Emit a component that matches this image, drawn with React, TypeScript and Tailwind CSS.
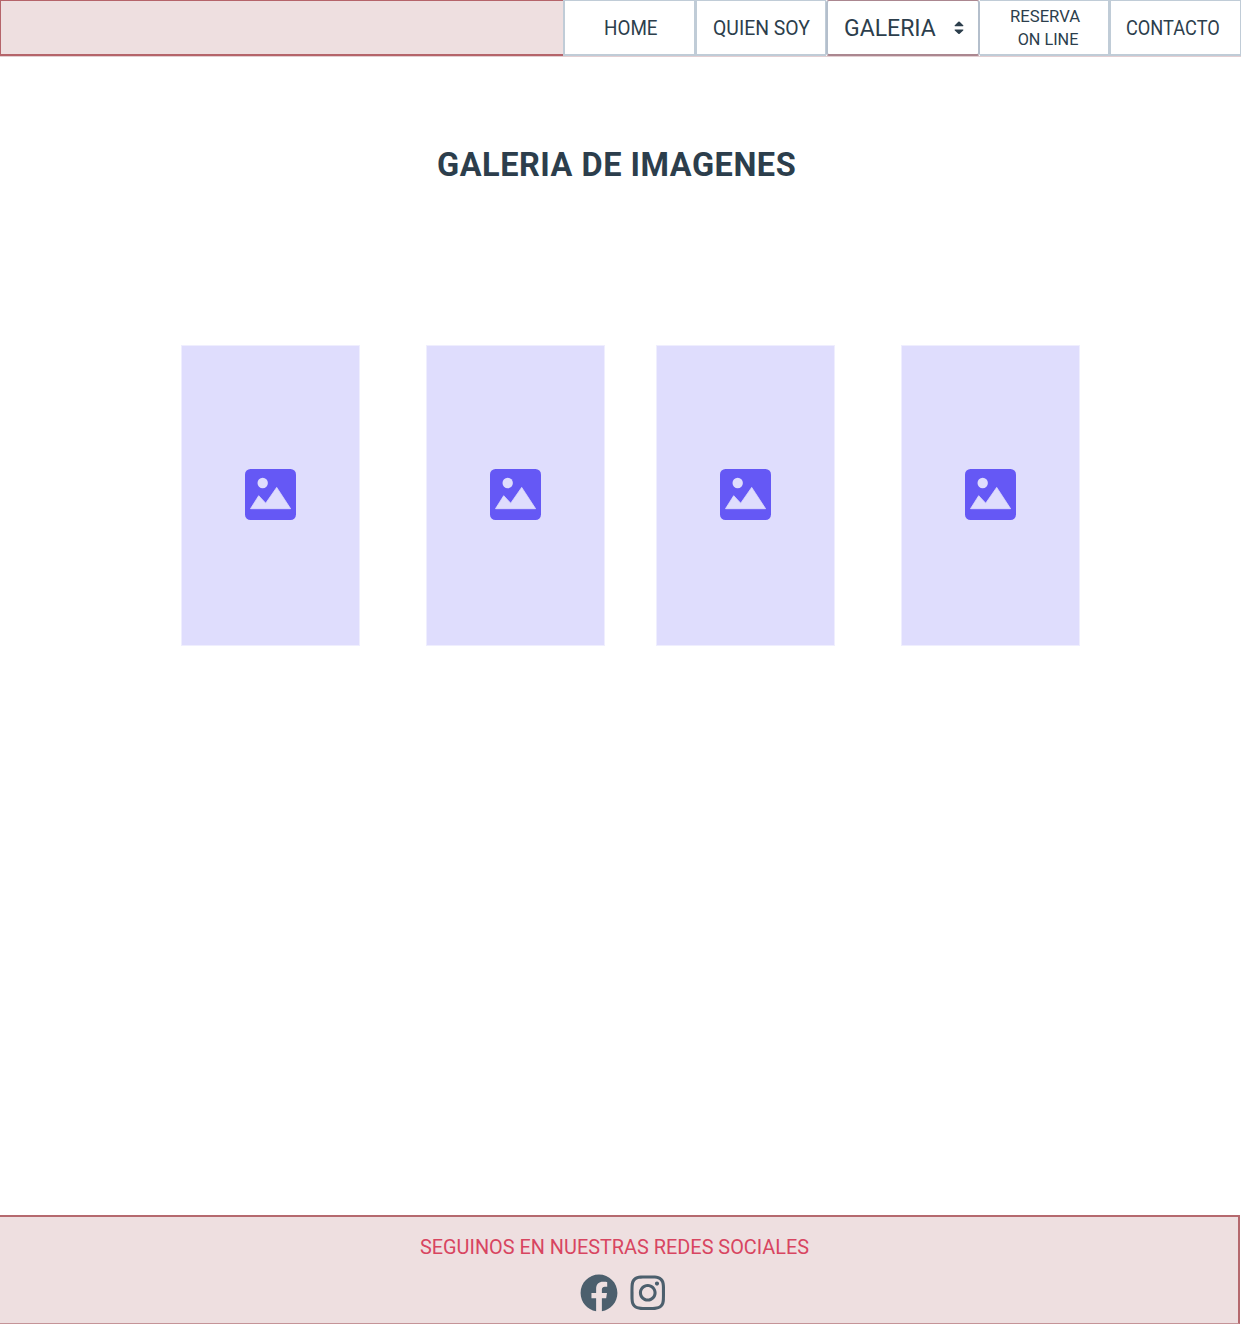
import type { ReactNode } from "react";
import { FaFacebook, FaInstagram } from "react-icons/fa";

function NavCell({ className, children }: { className: string; children: ReactNode }) {
  return (
    <a
      className={`flex h-14 shrink-0 items-center border-t border-b-2 border-[#c0ccd7] bg-white whitespace-nowrap ${className}`}
    >
      {children}
    </a>
  );
}

function PictureCard() {
  return (
    <div className="flex h-[301px] w-[179px] justify-center border border-[#efeefe] bg-[#dfddfd] pt-[123px]">
      <svg viewBox="0 0 51 51" className="size-[51px]">
        <rect width="51" height="51" rx="5.5" fill="#6558f5" />
        <circle cx="17.7" cy="14" r="5.2" fill="#dfddfd" />
        <path d="M5.5 39.7 13.7 26.7 20.7 34.2 31.7 18.4 45.6 39.7Z" fill="#dfddfd" stroke="#dfddfd" strokeWidth="0.8" strokeLinejoin="round" />
      </svg>
    </div>
  );
}

export default function App() {
  return (
    <div className="flex h-[1324px] w-[1241px] flex-col overflow-hidden bg-white font-['Roboto',sans-serif] text-[#2c3e4c]">
      <header className="flex h-[57px] shrink-0 border-b border-[#e3cfd2]">
        <div className="h-14 w-[563px] shrink-0 border-t border-b-2 border-l border-[#b5646a] bg-[#eedfe0]" />
        <NavCell className="w-[132px] border-r border-l-2 pt-[2px] pl-[39px]">
          <span className="origin-left scale-x-[0.91] text-[20.7px] font-[450]">HOME</span>
        </NavCell>
        <NavCell className="w-[131px] border-r border-l-2 pt-[2px] pl-4">
          <span className="origin-left scale-x-[0.937] text-[20.7px] font-[450]">QUIEN SOY</span>
        </NavCell>
        <a className="flex h-14 w-[154px] shrink-0 items-center rounded-[3px] border-x-2 border-t border-b-2 border-x-[#b4bfcc] border-t-[#ab8790] border-b-[#ab8790] bg-white pl-4">
          <span className="w-[110px] pt-[3px] text-[23px]">GALERIA</span>
          <svg viewBox="0 0 10 14" className="h-3.5 w-2.5" fill="#2c3e4c">
            <path d="M1.2 5.3Q0 5.3.8 4.3L4.3.8Q5 .2 5.7.8L9.2 4.3Q10 5.3 8.8 5.3ZM1.2 8.4Q0 8.4.8 9.4L4.3 12.7Q5 13.3 5.7 12.7L9.2 9.4Q10 8.4 8.8 8.4Z" />
          </svg>
        </a>
        <NavCell className="w-[130px] border-r-2 pt-px pl-[30px]">
          <span className="flex flex-col text-[17px] leading-[23px]">
            <span className="origin-left scale-x-[0.98]">RESERVA</span>
            <span className="origin-left scale-x-[0.955] pl-2">ON LINE</span>
          </span>
        </NavCell>
        <NavCell className="w-[131px] border-r border-l pt-[2px] pl-[15px]">
          <span className="origin-left scale-x-[0.88] text-[20.7px] font-[450]">CONTACTO</span>
        </NavCell>
      </header>

      <main className="flex flex-1 flex-col">
        <h1 className="mt-[88px] pl-[437px] text-[32.5px] leading-10 font-bold tracking-[0.52px] whitespace-nowrap">
          GALERIA DE IMAGENES
        </h1>
        <section className="mt-40 flex pl-[181px]">
          <div className="flex gap-[66px]">
            <PictureCard />
            <PictureCard />
          </div>
          <div className="ml-[51px] flex gap-[66px]">
            <PictureCard />
            <PictureCard />
          </div>
        </section>
      </main>

      <footer className="h-[109px] w-[1240px] shrink-0 border-t-2 border-r-2 border-b border-[#b5696e] border-b-[#c59498] bg-[#eedfe0]">
        <p className="mt-[15px] ml-[419.5px] w-max origin-left scale-x-[0.946] text-[21px] leading-[30px] font-[450] whitespace-nowrap text-[#d84560]">
          SEGUINOS EN NUESTRAS REDES SOCIALES
        </p>
        <div className="mt-[11px] ml-[580px] flex h-10 items-center gap-[9.5px] text-[#4c5f6d]">
          <FaFacebook className="size-[38px]" />
          <FaInstagram className="size-[39.5px]" />
        </div>
      </footer>
    </div>
  );
}
